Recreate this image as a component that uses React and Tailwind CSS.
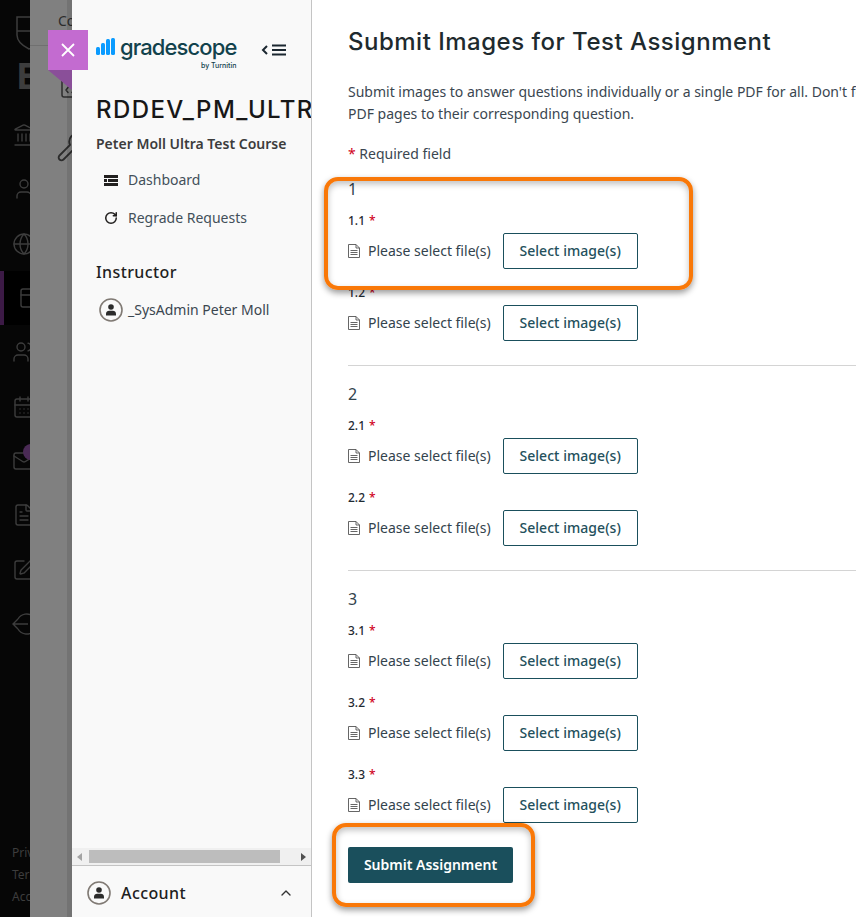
import { ChevronUp, Globe, Landmark, CalendarDays, Mail, SquarePen, User, Users, PanelTop, Wrench, RotateCw, FileText, FileCode } from "lucide-react";

const sections = [
  { id: "1", questions: ["1.1", "1.2"] },
  { id: "2", questions: ["2.1", "2.2"] },
  { id: "3", questions: ["3.1", "3.2", "3.3"] },
];

function LeaveIcon(props) {
  return (
    <svg width={props.size} height={props.size} viewBox="0 0 24 24" fill="none" stroke="currentColor" strokeWidth={props.strokeWidth} className={props.className}>
      <path d="M6 7a10 10 0 1 1 0 10" />
      <path d="M16 12H1M6 7l-5 5 5 5" />
    </svg>
  );
}

const railIcons = [Landmark, User, Globe, PanelTop, Users, CalendarDays, Mail, FileText, SquarePen, LeaveIcon];

function Avatar({ size }) {
  return (
    <svg width={size} height={size} viewBox="0 0 24 24" className="shrink-0">
      <circle cx="12" cy="12" r="11" fill="none" stroke="#807a74" strokeWidth="1.6" />
      <circle cx="12" cy="9" r="2.8" fill="#2b2b2b" />
      <path d="M7 17.5v-1.7c0-2 1.5-3.1 3.1-3.1h3.8c1.6 0 3.1 1.1 3.1 3.1v1.7z" fill="#2b2b2b" />
    </svg>
  );
}

function PageIcon() {
  return (
    <svg width="12" height="14" viewBox="0 0 12 14" fill="none" stroke="#555" strokeWidth="0.9" className="mr-2 shrink-0">
      <path d="M.5.5h7.5l3.5 3.5v9.5H.5z" />
      <path d="M8 .5V4h3.5M2.5 6.5h7M2.5 8.5h7M2.5 10.5h7" />
    </svg>
  );
}

function Logo() {
  return (
    <div className="flex items-start">
      <svg width="24" height="17" viewBox="0 0 24 17" className="mt-[5px] shrink-0">
        <rect x="0" y="9" width="4" height="8" rx="1.5" fill="#0a9bff" />
        <rect x="5" y="5" width="4" height="12" rx="1.5" fill="#0a9bff" />
        <rect x="10" y="1" width="4" height="16" rx="1.5" fill="#0a9bff" />
        <rect x="15" y="0" width="4" height="17" rx="1.5" fill="#0a9bff" />
      </svg>
      <div className="flex flex-col items-end">
        <span className="font-['Inter',sans-serif] text-[22px] leading-[28px] font-medium tracking-[-0.9px] text-[#12424c]">gradescope</span>
        <span className="font-['Inter',sans-serif] text-[7px] leading-[9px] font-medium text-[#12424c]">by Turnitin</span>
      </div>
    </div>
  );
}

function FileRow({ label }) {
  return (
    <div className="mb-[13px]">
      <div className="flex h-5 items-center pt-[1px] text-xs font-medium text-[#1f2b33]">
        {label}
        <span className="ml-1 text-[#d0021b]">*</span>
      </div>
      <div className="mt-[3px] flex h-9 items-center">
        <PageIcon />
        <span className="text-sm text-[#33434d]">Please select file(s)</span>
        <button className="ml-3 h-9 w-[135px] rounded-[2px] border border-[#1a4f5c] bg-white text-sm font-medium tracking-[0.05px] text-[#24505c]">
          Select image(s)
        </button>
      </div>
    </div>
  );
}

export default function App() {
  return (
    <div className="relative flex h-[917px] w-[856px] overflow-hidden bg-white font-['Noto_Sans',sans-serif]">
      {/* dimmed ultra nav */}
      <div className="flex w-[30px] shrink-0 flex-col overflow-hidden bg-[#060606] text-[#3d3d3d]">
        <div className="h-[54px] pl-4 pt-4">
          <svg width="26" height="34" viewBox="0 0 26 34" fill="none" stroke="currentColor" strokeWidth="1.5">
            <path d="M1 1h24v18c0 7-6 11-12 14C7 30 1 26 1 19z" />
            <path d="M1 15h24" />
          </svg>
        </div>
        <div className="h-[54px] pl-4 pt-[2px] text-[36px] leading-[40px] font-bold">E</div>
        {railIcons.map((Icon, i) => (
          <div key={i} className={`relative flex h-[54.3px] items-center pl-3 ${i === 3 ? "border-l-4 border-[#3c1a46] bg-black pl-[14px]" : ""}`}>
            <Icon size={24} strokeWidth={1.4} className="shrink-0" />
            {i === 6 && <span className="absolute top-[10px] left-[23px] h-4 w-4 rounded-full bg-[#4a2a55]" />}
          </div>
        ))}
        <div className="mt-auto pb-[9px] pl-3 text-xs leading-[22px] whitespace-nowrap">
          <div>Privacy</div>
          <div>Terms</div>
          <div>Accessibility</div>
        </div>
      </div>

      {/* dimmed course panel */}
      <div className="relative w-[42px] shrink-0 overflow-hidden bg-[#808080] pt-[11px] text-[#2c2c2c]">
        <div className="h-[35px] border-b border-[#707070] pl-7 text-sm leading-5 whitespace-nowrap">Content</div>
        <FileCode size={24} strokeWidth={1.5} className="mt-[29px] ml-[28px] shrink-0" />
        <Wrench size={32} strokeWidth={1.4} className="mt-[32px] ml-[26px] shrink-0" />
        <div className="absolute inset-y-0 right-0 w-[5px] bg-black/10" />
      </div>

      {/* gradescope sidebar */}
      <aside className="flex w-[240px] shrink-0 flex-col border-r border-[#c4c4c4] bg-[#f9f9f9]">
        <div className="min-h-0 flex-1 overflow-hidden pl-6">
          <div className="flex h-[76px] items-start pt-[33px]">
            <Logo />
            <div className="mt-[10px] ml-[25px] flex items-center text-[#1b2730]">
              <svg width="26" height="14" viewBox="0 0 26 14" fill="none" stroke="currentColor">
                <path d="M6 3 2 7l4 4" strokeWidth="2" />
                <path d="M11 2.5h14M11 7h14M11 11.5h14" strokeWidth="2" />
              </svg>
            </div>
          </div>
          <h2 className="mt-[18px] font-['Inter',sans-serif] text-[24px] leading-8 font-medium tracking-[1.4px] whitespace-nowrap text-[#171717]">RDDEV_PM_ULTRA</h2>
          <p className="mt-[8px] text-sm leading-5 font-semibold whitespace-nowrap text-[#3c3c3c]">Peter Moll Ultra Test Course</p>
          <nav className="mt-[16px] text-sm text-[#43505a]">
            <div className="flex h-5 items-center">
              <svg width="14" height="11" viewBox="0 0 14 11" className="ml-2 mr-[10px]">
                <path d="M0 0h14v3H0zM0 4h3v3H0zM4 4h10v3H4zM0 8h14v3H0z" fill="#22201f" />
              </svg>
              Dashboard
            </div>
            <div className="mt-[18px] flex h-5 items-center">
              <RotateCw size={14} strokeWidth={2.6} className="ml-2 mr-[10px] text-[#22201f]" />
              Regrade Requests
            </div>
          </nav>
          <h3 className="mt-[32px] text-base leading-6 font-medium tracking-[0.4px] text-[#1f1f1f]">Instructor</h3>
          <div className="mt-[14px] ml-[3px] flex items-center gap-[5px] text-sm leading-6 whitespace-nowrap text-[#3b4650]">
            <Avatar size={24} />
            _SysAdmin Peter Moll
          </div>
        </div>
        <div className="flex h-[17px] items-center bg-[#f0f0f0] px-[5px]">
          <span className="h-0 w-0 border-y-[4px] border-r-[5px] border-y-transparent border-r-[#a3a3a3]" />
          <span className="ml-[7px] h-[13px] w-[191px] bg-[#bdbdbd]" />
          <span className="ml-auto h-0 w-0 border-y-[4px] border-l-[5px] border-y-transparent border-l-[#505050]" />
        </div>
        <div className="flex h-[52px] items-center border-t border-[#c4c4c4] pt-[2px] pr-[17px] pl-[15px] text-base font-medium text-[#202020]">
          <Avatar size={24} />
          <span className="ml-[10px] tracking-[0.4px]">Account</span>
          <ChevronUp size={16} strokeWidth={2} className="ml-auto text-[#333]" />
        </div>
      </aside>

      {/* main form */}
      <main className="min-w-0 flex-1 overflow-hidden pt-[26px] pl-9">
        <h1 className="font-['Inter',sans-serif] text-[24px] leading-8 font-medium tracking-[0.5px] whitespace-nowrap text-[#1e2a2e]">
          Submit Images for Test Assignment
        </h1>
        <p className="mt-[23px] text-sm leading-[22px] whitespace-nowrap text-[#3a4650]">
          Submit images to answer questions individually or a single PDF for all. Don't forget to match
          <br />
          PDF pages to their corresponding question.
        </p>
        <p className="mt-[18px] h-[22px] text-sm leading-[22px] text-[#3a4650]">
          <span className="text-[#d0021b]">*</span> Required field
        </p>
        <div className="mt-[14px]">
          {sections.map((section, i) => (
            <section key={section.id} className={i > 0 ? "mt-6 border-t border-[#d4d4d4] pt-[18px]" : ""}>
              <div className="mb-[11px] h-5 text-base leading-5 text-[#33434d]">{section.id}</div>
              {section.questions.map((q) => (
                <FileRow key={q} label={q} />
              ))}
            </section>
          ))}
        </div>
        <button className="mt-[11px] h-9 w-[165px] rounded-[2px] bg-[#1a4f5c] text-sm font-semibold text-white">
          Submit Assignment
        </button>
      </main>

      {/* close tab over the panels */}
      <button className="absolute top-[30px] left-[48px] flex h-10 w-10 items-center justify-center bg-[#c36bd0] text-white">
        <svg width="14" height="14" viewBox="0 0 14 14" stroke="currentColor" strokeWidth="1.8">
          <path d="m1 1 12 12M13 1 1 13" />
        </svg>
      </button>
      <div className="absolute top-[70px] left-[48px] h-0 w-0 border-t-[20px] border-l-[24px] border-t-[#8a4f99] border-l-transparent" />

      {/* annotation highlights */}
      <div className="absolute top-[177px] left-[324px] h-[113px] w-[369px] rounded-[14px] border-4 border-[#f97808] shadow-[0_3px_6px_rgba(0,0,0,0.4),inset_0_3px_6px_rgba(0,0,0,0.25)]" />
      <div className="absolute top-[823px] left-[332px] h-[84px] w-[203px] rounded-[14px] border-4 border-[#f97808] shadow-[0_3px_6px_rgba(0,0,0,0.4),inset_0_3px_6px_rgba(0,0,0,0.25)]" />
    </div>
  );
}
